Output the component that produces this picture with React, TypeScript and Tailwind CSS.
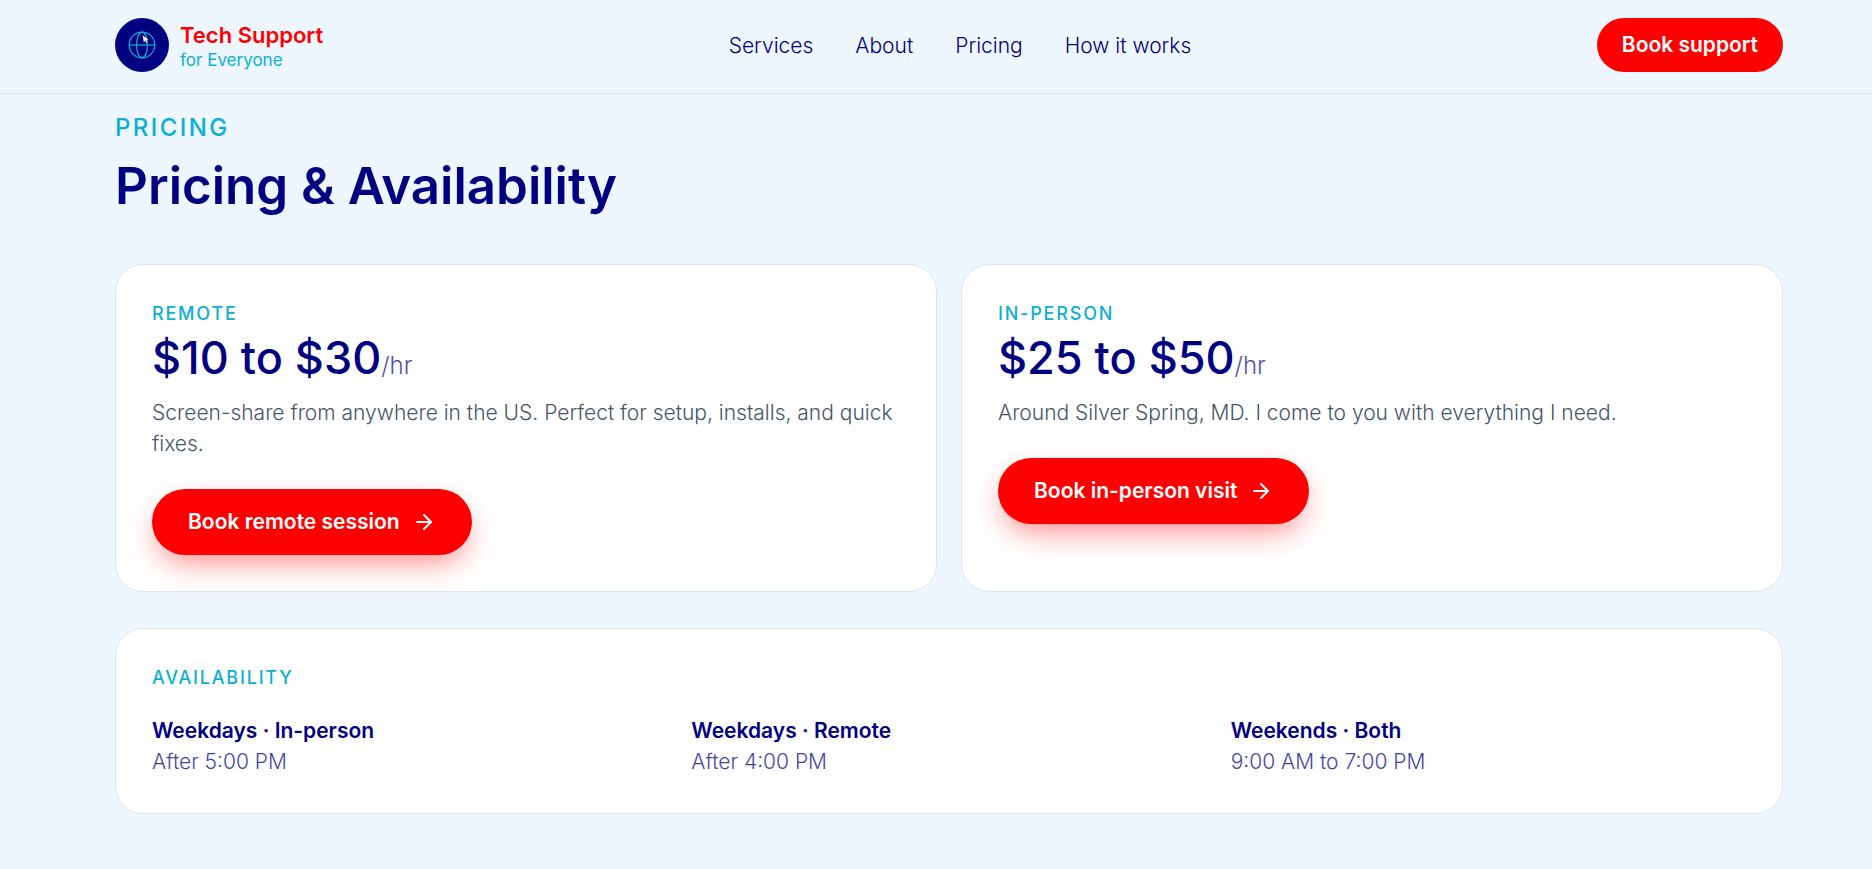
import { ArrowRight } from "lucide-react";

const NAV_LINKS = [
    { label: "Services", href: "#services" },
    { label: "About", href: "#about" },
    { label: "Pricing", href: "#pricing" },
    { label: "How it works", href: "#how-it-works" },
];

const PLANS = [
    {
        name: "Remote",
        price: "$10 to $30",
        description: "Screen-share from anywhere in the US. Perfect for setup, installs, and quick fixes.",
        cta: "Book remote session",
    },
    {
        name: "In-person",
        price: "$25 to $50",
        description: "Around Silver Spring, MD. I come to you with everything I need.",
        cta: "Book in-person visit",
    },
];

const HOURS = [
    { label: "Weekdays · In-person", time: "After 5:00 PM" },
    { label: "Weekdays · Remote", time: "After 4:00 PM" },
    { label: "Weekends · Both", time: "9:00 AM to 7:00 PM" },
];

function Logo() {
    return (
        <svg viewBox="0 0 54 54" className="size-[54px] shrink-0" fill="none" aria-hidden="true">
            <circle cx="27" cy="27" r="27" fill="#000080" />
            <g stroke="#0bb0d2" strokeWidth="1.2">
                <circle cx="27" cy="27" r="12.8" />
                <ellipse cx="27" cy="27" rx="5.4" ry="12.8" />
                <path d="M14.2 27h25.6" />
            </g>
            <path d="M27.6 17.6l5.6 3.7-1.9.8 1.4 2.2-1 .7-1.5-2.2-1.3 1.6z" fill="#fff" />
        </svg>
    );
}

function Header() {
    return (
        <header className="border-b border-[#d9e6f5]">
            <div className="flex items-center justify-between pt-[18px] pb-[21px] pl-[115px] pr-[89px]">
                <a href="#" className="flex items-center gap-[11px]">
                    <Logo />
                    <span className="flex flex-col pt-1">
                        <span className="text-[22px] leading-[26px] font-semibold text-[#ff0000]">Tech Support</span>
                        <span className="text-[17px] leading-6 text-[#0bb0d2]">for Everyone</span>
                    </span>
                </a>
                <nav className="flex items-center gap-[42px]">
                    {NAV_LINKS.map((link) => (
                        <a key={link.label} href={link.href} className="text-[21px] leading-[31px] font-light">
                            {link.label}
                        </a>
                    ))}
                </nav>
                <button type="button" className="h-[54px] rounded-full bg-[#ff0000] px-[25px] text-[21px] font-semibold text-white">
                    Book support
                </button>
            </div>
        </header>
    );
}

export default function App() {
    return (
        <div className="min-h-screen bg-[#eef6ff] font-['Inter',sans-serif] text-[#000080]">
            <Header />
            <main id="pricing" className="pt-4 pb-[54px] pl-[115px] pr-[89px]">
                <p className="text-[24px] leading-9 font-medium tracking-widest text-[#0bb0d2] uppercase">Pricing</p>
                <h1 className="mt-[10px] text-[51px] leading-[60px] font-semibold">Pricing & Availability</h1>

                <div className="mt-12 grid grid-cols-2 gap-6">
                    {PLANS.map((plan) => (
                        <section key={plan.name} className="rounded-[28px] border border-[#d9e6f5] bg-white p-9">
                            <h2 className="text-[18px] leading-[26px] font-medium tracking-widest text-[#0bb0d2] uppercase">{plan.name}</h2>
                            <p className="mt-1 text-[45px] leading-[54px] font-medium">
                                {plan.price}
                                <span className="text-[24px] font-light text-[#000080]/70">/hr</span>
                            </p>
                            <p className="mt-1 text-[21px] leading-[31px] font-light text-[#475569]">{plan.description}</p>
                            <button
                                type="button"
                                className="mt-[30px] flex h-[66px] items-center gap-3 rounded-full bg-[#ff0000] px-9 text-[21px] font-semibold text-white shadow-[0_12px_32px_-8px_rgba(255,0,0,0.55)]"
                            >
                                {plan.cta}
                                <ArrowRight className="size-6" />
                            </button>
                        </section>
                    ))}
                </div>

                <section className="mt-9 rounded-[28px] border border-[#d9e6f5] bg-white p-9">
                    <h2 className="text-[18px] leading-[26px] font-medium tracking-widest text-[#0bb0d2] uppercase">Availability</h2>
                    <dl className="mt-6 grid grid-cols-3 gap-6">
                        {HOURS.map((slot) => (
                            <div key={slot.label} className="text-[21px] leading-[31px]">
                                <dt className="font-semibold">{slot.label}</dt>
                                <dd className="font-light text-[#000080]/75">{slot.time}</dd>
                            </div>
                        ))}
                    </dl>
                </section>
            </main>
        </div>
    );
}
